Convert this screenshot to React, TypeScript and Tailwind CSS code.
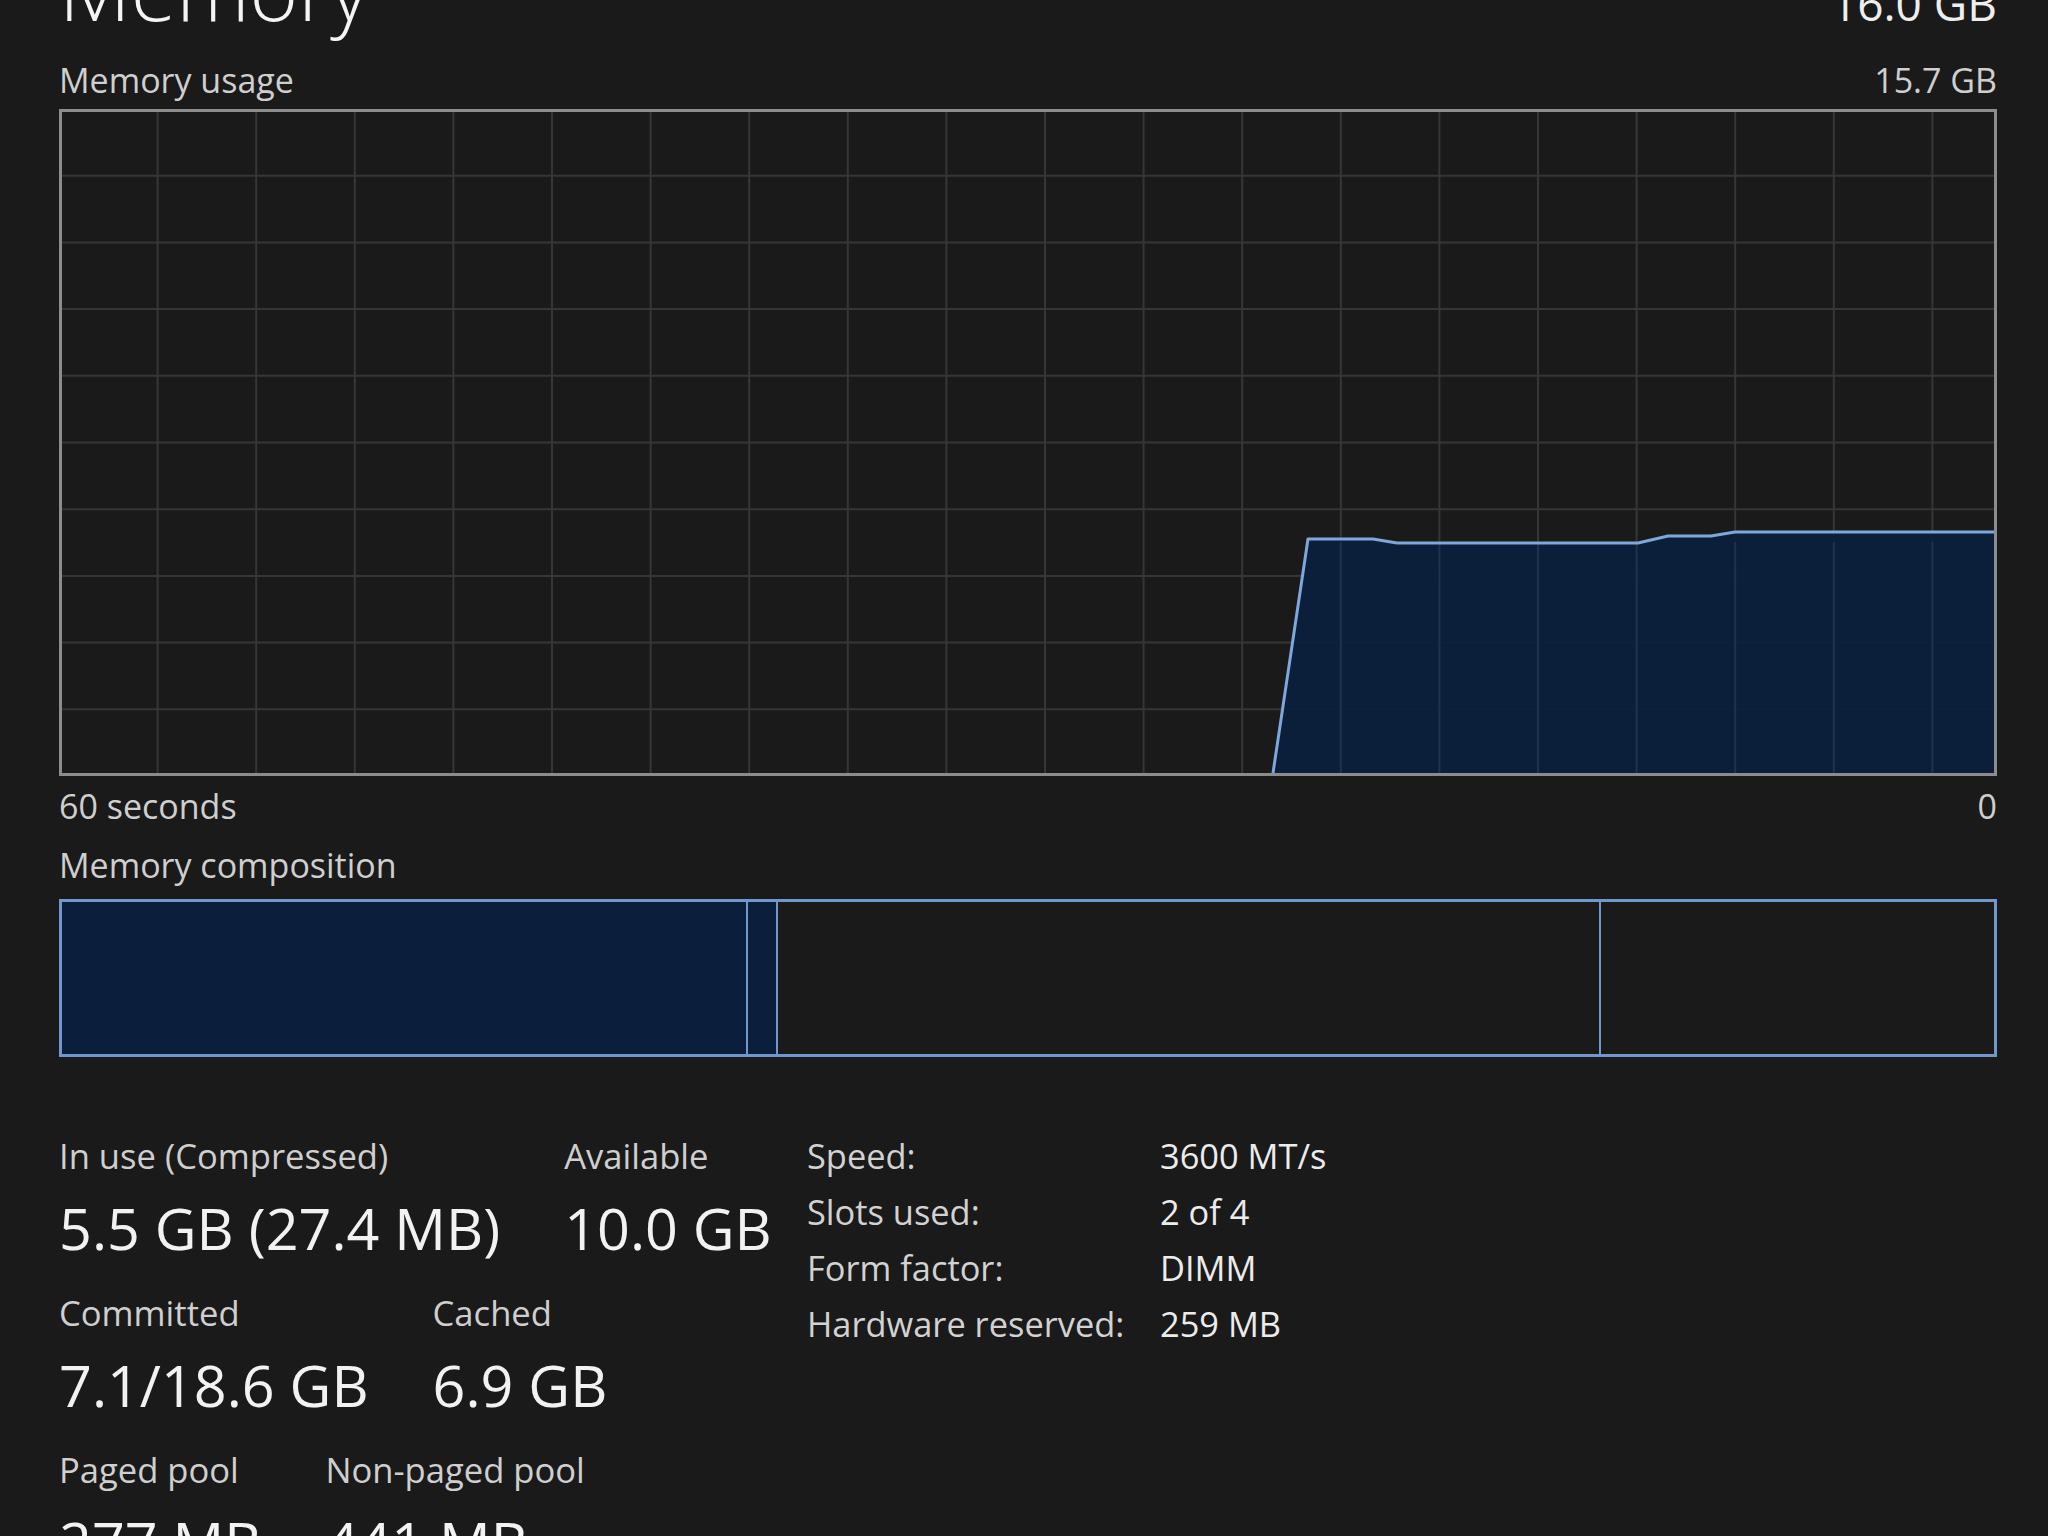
import React from "react";

const FONT = { fontFamily: '"Open Sans", "Noto Sans", "Liberation Sans", sans-serif' };

// chart area inside the 3px border: 1932 x 661
const W = 1932;
const H = 661;
const COL = 98.6;
const ROW = 66.7;

const usage: [number, number][] = [
  [1211, H],
  [1246, 427],
  [1311, 427],
  [1335, 431],
  [1576, 431],
  [1606, 424],
  [1649, 424],
  [1673, 420],
  [W, 420],
];

function UsageChart() {
  const vLines = [];
  for (let k = 1; k * COL - 3 < W; k++) vLines.push(k * COL - 3);
  const hLines = [];
  for (let k = 1; k < 10; k++) hLines.push(k * ROW - 3);
  const line = usage.map(([x, y]) => `${x},${y}`).join(" ");
  const area = `${line} ${W},${H} ${usage[0][0]},${H}`;
  return (
    <svg width={W} height={H} viewBox={`0 0 ${W} ${H}`} className="block">
      {vLines.map(x => <line key={"v" + x} x1={x} y1={0} x2={x} y2={H} stroke="#363636" strokeWidth={2} />)}
      {hLines.map(y => <line key={"h" + y} x1={0} y1={y} x2={W} y2={y} stroke="#363636" strokeWidth={2} />)}
      <polygon points={area} fill="#0b1f3d" fillOpacity={0.92} />
      {vLines.filter(x => x > 1211).map(x => <line key={"f" + x} x1={x} y1={430} x2={x} y2={H} stroke="#1f3350" strokeWidth={2} />)}
      <polyline points={line} fill="none" stroke="#7ea7dc" strokeWidth={3} strokeLinejoin="round" />
    </svg>
  );
}

function Stat({ label, value }: { label: string; value: string }) {
  return (
    <div className="flex flex-col">
      <div className="text-[34.6px] leading-[44px] text-[#cfcfcf] whitespace-nowrap">{label}</div>
      <div className="text-[57.5px] leading-[100px] text-[#f2f2f2] whitespace-nowrap">{value}</div>
    </div>
  );
}

export default function App() {
  const specs = [
    ["Speed:", "3600 MT/s"],
    ["Slots used:", "2 of 4"],
    ["Form factor:", "DIMM"],
    ["Hardware reserved:", "259 MB"],
  ];

  return (
    <div className="w-full h-[1536px] overflow-hidden bg-[#1a1a1a] text-[#e8e8e8]" style={FONT}>
      <div className="pl-[59px] pr-[51px] flex flex-col">
        <div className="flex justify-between items-baseline h-[112px] -mt-[53px]">
          <span className="text-[83px] font-light leading-none text-[#f4f4f4]">Memory</span>
          <span className="text-[46px] leading-none text-[#eeeeee]">16.0 GB</span>
        </div>

        <div className="flex justify-between items-center h-[40px] mt-[1px] text-[34px] text-[#cfcfcf]">
          <span>Memory usage</span>
          <span>15.7 GB</span>
        </div>

        <div className="mt-[9px] border-[3px] border-[#8c8c8c] w-[1938px] h-[667px]">
          <UsageChart />
        </div>

        <div className="flex justify-between items-center h-[40px] mt-[10px] text-[34px] text-[#cfcfcf]">
          <span>60 seconds</span>
          <span>0</span>
        </div>

        <div className="flex items-center h-[40px] mt-[19px] text-[34px] text-[#cfcfcf]">
          <span>Memory composition</span>
        </div>

        <div className="mt-[14px] h-[158px] w-[1938px] flex border-[3px] border-[#7098cc]">
          <div className="w-[686px] bg-[#0b1f3d] border-r-2 border-[#7098cc]" />
          <div className="w-[30px] bg-[#0b1f3d] border-r-2 border-[#7098cc]" />
          <div className="w-[823px] border-r-2 border-[#7098cc]" />
          <div className="flex-1" />
        </div>

        <div className="mt-[77px] flex">
          <div className="w-[748px] flex flex-col gap-[13px]">
            <div className="flex gap-[64px]">
              <Stat label="In use (Compressed)" value="5.5 GB (27.4 MB)" />
              <Stat label="Available" value="10.0 GB" />
            </div>
            <div className="flex gap-[64px]">
              <Stat label="Committed" value="7.1/18.6 GB" />
              <Stat label="Cached" value="6.9 GB" />
            </div>
            <div className="flex gap-[64px]">
              <Stat label="Paged pool" value="277 MB" />
              <Stat label="Non-paged pool" value="441 MB" />
            </div>
          </div>

          <div className="-mt-[6px] grid grid-cols-[353px_auto] text-[34.4px] leading-[56px] text-[#d2d2d2] h-fit">
            {specs.map(([k, v]) => (
              <React.Fragment key={k}>
                <span className="whitespace-nowrap">{k}</span>
                <span className="whitespace-nowrap text-[#ececec]">{v}</span>
              </React.Fragment>
            ))}
          </div>
        </div>
      </div>
    </div>
  );
}
